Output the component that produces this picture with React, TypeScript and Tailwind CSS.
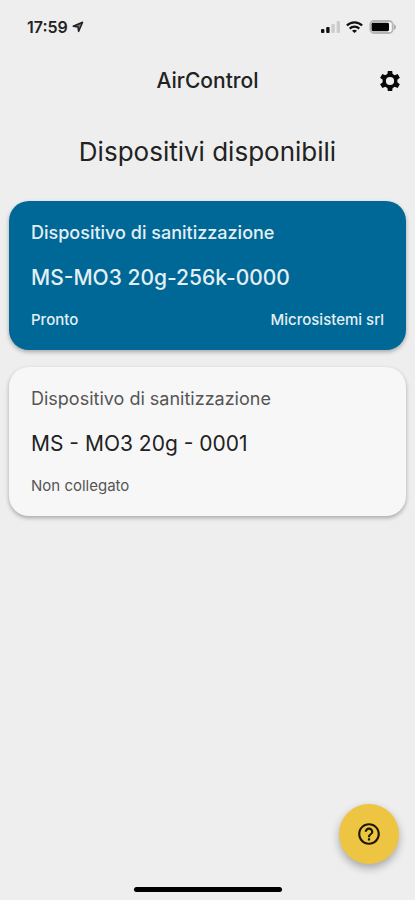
import { MdHelpOutline } from "react-icons/md";

type Device = {
  type: string;
  name: string;
  status: string;
  owner?: string;
  connected: boolean;
};

const devices: Device[] = [
  {
    type: "Dispositivo di sanitizzazione",
    name: "MS-MO3 20g-256k-0000",
    status: "Pronto",
    owner: "Microsistemi srl",
    connected: true,
  },
  {
    type: "Dispositivo di sanitizzazione",
    name: "MS - MO3 20g - 0001",
    status: "Non collegato",
    connected: false,
  },
];

const GearIcon = () => (
  <svg className="h-6 w-6" viewBox="0 0 24 24" fill="#080808" aria-hidden="true">
    {[0, 60, 120].map((angle) => (
      <g key={angle} transform={`rotate(${angle} 12 12)`}>
        <path d="M9.8 1.9h4.4l.6 5.1H9.2z" />
        <path d="M9.8 22.1h4.4l.6-5.1H9.2z" />
      </g>
    ))}
    <circle cx="12" cy="12" r="5.8" fill="none" stroke="#080808" strokeWidth="3.4" />
  </svg>
);

const StatusBar = () => (
  <div className="flex h-[54px] items-center justify-between pl-[27px] pr-[18px]">
    <div className="flex items-center gap-1 text-base font-semibold text-[#222]">
      <span>17:59</span>
      {/* Location arrow */}
      <svg className="h-3 w-3" viewBox="0 0 12 12" aria-hidden="true">
        <path d="M1.2 5.2 10.6 1.2 6.6 10.4 6 5.9Z" fill="#777" stroke="#222" strokeWidth="1.5" strokeLinejoin="round" />
      </svg>
    </div>

    <div className="flex items-center gap-1.5">
      {/* Signal */}
      <svg className="h-3 w-[19px]" viewBox="0 0 19 12" aria-hidden="true">
        <rect x="0" y="8" width="3.4" height="4" rx="1" fill="#111" />
        <rect x="5.2" y="6" width="3.4" height="6" rx="1" fill="#111" />
        <rect x="10.4" y="3" width="3.4" height="9" rx="1" fill="#ccc" />
        <rect x="15.6" y="0" width="3.4" height="12" rx="1" fill="#ccc" />
      </svg>
      {/* Wifi */}
      <svg className="h-3 w-[17px]" viewBox="0 0 17 12" fill="none" stroke="#111" strokeWidth="2.2" aria-hidden="true">
        <path d="M0.9 4.6C5.1 0.2 11.9 0.2 16.1 4.6" />
        <path d="M3.7 7.6C6.4 5 10.6 5 13.3 7.6" />
        <path d="M6 9.7C7.4 8.4 9.6 8.4 11 9.7L8.5 12Z" fill="#111" stroke="none" />
      </svg>
      {/* Battery */}
      <svg className="h-3.5 w-7" viewBox="0 0 28 14" aria-hidden="true">
        <rect x="1.3" y="1" width="22.4" height="12" rx="3.5" fill="#f8f8f8" stroke="#b5b5b5" strokeWidth="1.8" />
        <rect x="2.6" y="2.8" width="17.4" height="8.4" rx="1.4" fill="#050505" />
        <path d="M25 4.2C27.6 5.2 27.6 8.8 25 9.8Z" fill="#aaa" />
      </svg>
    </div>
  </div>
);

const DeviceCard = ({ device }: { device: Device }) => (
  <li
    className={
      device.connected
        ? "rounded-[20px] bg-[#006896] px-[22px] py-5 font-medium text-[#e4eff5] shadow-[0_2px_4px_rgba(0,0,0,0.3)]"
        : "rounded-[20px] bg-[#f7f7f7] px-[22px] py-5 text-[#555] shadow-[0_2px_4px_rgba(0,0,0,0.3)]"
    }
  >
    <p className="text-lg leading-6">{device.type}</p>
    <h2 className={device.connected ? "mt-[21px] text-[21px] leading-6" : "mt-[21px] text-[21px] leading-6 text-[#222]"}>
      {device.name}
    </h2>
    <div className="mt-5 flex justify-between text-[15px] leading-5">
      <span>{device.status}</span>
      {device.owner && <span>{device.owner}</span>}
    </div>
  </li>
);

const App = () => {
  return (
    <div className="flex min-h-screen flex-col bg-[#eee] font-['Inter',sans-serif] text-[#222]">
      <StatusBar />

      <header className="grid h-[54px] grid-cols-[1fr_auto_1fr] items-center px-[13px]">
        <h1 className="col-start-2 text-[21px] font-medium">AirControl</h1>
        <button type="button" aria-label="Impostazioni" className="cursor-pointer justify-self-end">
          <GearIcon />
        </button>
      </header>

      <main className="grow px-[9px]">
        <h2 className="mt-7 text-center text-[26px] leading-8">Dispositivi disponibili</h2>
        <ul className="mt-[33px] flex flex-col gap-[17px]">
          {devices.map((device) => (
            <DeviceCard key={device.name} device={device} />
          ))}
        </ul>
      </main>

      <footer className="flex flex-col px-4 pb-2">
        <button
          type="button"
          aria-label="Aiuto"
          className="flex h-15 w-15 cursor-pointer items-center justify-center self-end rounded-full bg-[#edc542] shadow-[0_4px_8px_rgba(0,0,0,0.3)]"
        >
          <MdHelpOutline className="h-[26px] w-[26px] text-[#1d1803]" />
        </button>
        <div className="mt-[23px] h-[5px] w-37 self-center rounded-full bg-black" />
      </footer>
    </div>
  );
};

export default App;
